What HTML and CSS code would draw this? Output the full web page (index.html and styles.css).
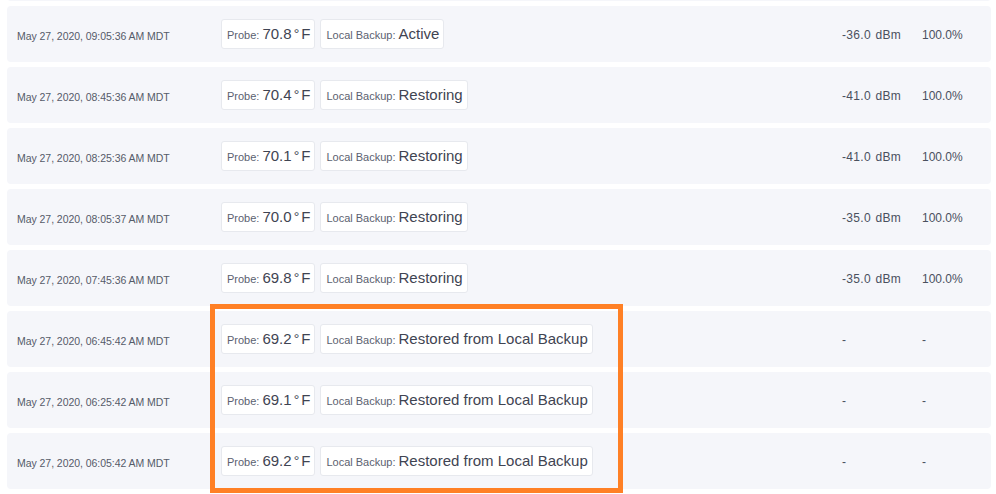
FILE: index.html
```html
<!DOCTYPE html>
<html lang="en">
<head>
<meta charset="utf-8">
<title>Readings</title>
<link rel="stylesheet" href="styles.css">
</head>
<body>
<div class="page">
  <div class="list">
    <div class="row row-edge"></div>
    <div class="row">
      <div class="date">May 27, 2020, 09:05:36 AM MDT</div>
      <div class="badges">
        <span class="badge"><span class="lbl">Probe:</span><span class="val">70.8<span class="deg">°</span>F</span></span>
        <span class="badge"><span class="lbl">Local Backup:</span><span class="val">Active</span></span>
      </div>
      <div class="sig">-36.0 dBm</div>
      <div class="bat">100.0%</div>
    </div>
    <div class="row">
      <div class="date">May 27, 2020, 08:45:36 AM MDT</div>
      <div class="badges">
        <span class="badge"><span class="lbl">Probe:</span><span class="val">70.4<span class="deg">°</span>F</span></span>
        <span class="badge"><span class="lbl">Local Backup:</span><span class="val">Restoring</span></span>
      </div>
      <div class="sig">-41.0 dBm</div>
      <div class="bat">100.0%</div>
    </div>
    <div class="row">
      <div class="date">May 27, 2020, 08:25:36 AM MDT</div>
      <div class="badges">
        <span class="badge"><span class="lbl">Probe:</span><span class="val">70.1<span class="deg">°</span>F</span></span>
        <span class="badge"><span class="lbl">Local Backup:</span><span class="val">Restoring</span></span>
      </div>
      <div class="sig">-41.0 dBm</div>
      <div class="bat">100.0%</div>
    </div>
    <div class="row">
      <div class="date">May 27, 2020, 08:05:37 AM MDT</div>
      <div class="badges">
        <span class="badge"><span class="lbl">Probe:</span><span class="val">70.0<span class="deg">°</span>F</span></span>
        <span class="badge"><span class="lbl">Local Backup:</span><span class="val">Restoring</span></span>
      </div>
      <div class="sig">-35.0 dBm</div>
      <div class="bat">100.0%</div>
    </div>
    <div class="row">
      <div class="date">May 27, 2020, 07:45:36 AM MDT</div>
      <div class="badges">
        <span class="badge"><span class="lbl">Probe:</span><span class="val">69.8<span class="deg">°</span>F</span></span>
        <span class="badge"><span class="lbl">Local Backup:</span><span class="val">Restoring</span></span>
      </div>
      <div class="sig">-35.0 dBm</div>
      <div class="bat">100.0%</div>
    </div>
    <div class="row">
      <div class="date">May 27, 2020, 06:45:42 AM MDT</div>
      <div class="badges">
        <span class="badge"><span class="lbl">Probe:</span><span class="val">69.2<span class="deg">°</span>F</span></span>
        <span class="badge"><span class="lbl">Local Backup:</span><span class="val">Restored from Local Backup</span></span>
      </div>
      <div class="sig">-</div>
      <div class="bat">-</div>
    </div>
    <div class="row">
      <div class="date">May 27, 2020, 06:25:42 AM MDT</div>
      <div class="badges">
        <span class="badge"><span class="lbl">Probe:</span><span class="val">69.1<span class="deg">°</span>F</span></span>
        <span class="badge"><span class="lbl">Local Backup:</span><span class="val">Restored from Local Backup</span></span>
      </div>
      <div class="sig">-</div>
      <div class="bat">-</div>
    </div>
    <div class="row">
      <div class="date">May 27, 2020, 06:05:42 AM MDT</div>
      <div class="badges">
        <span class="badge"><span class="lbl">Probe:</span><span class="val">69.2<span class="deg">°</span>F</span></span>
        <span class="badge"><span class="lbl">Local Backup:</span><span class="val">Restored from Local Backup</span></span>
      </div>
      <div class="sig">-</div>
      <div class="bat">-</div>
    </div>
  </div>
  <div class="highlight"></div>
</div>
</body>
</html>
```
FILE: styles.css
```css
html, body {
  margin: 0;
  padding: 0;
  background: #ffffff;
}
body {
  font-family: "Liberation Sans", Arial, sans-serif;
  color: #444a58;
  overflow: hidden;
}
.page {
  position: relative;
  padding: 0 5px 0 7px;
  height: 494px;
  overflow: hidden;
}
.list {
  display: flex;
  flex-direction: column;
  gap: 5px;
  margin-top: -55px;
}
.row {
  display: grid;
  grid-template-columns: 204px 1fr 80px 69px;
  align-items: center;
  height: 56px;
  padding-left: 10px;
  background: #f5f6fa;
  border-radius: 4px;
  box-sizing: border-box;
}
.row-edge {
  display: block;
}
.date {
  font-size: 10.5px;
  letter-spacing: -0.05px;
  color: #555b69;
  padding-top: 4px;
}
.badges {
  display: flex;
  gap: 5px;
  align-items: center;
}
.badge {
  display: inline-flex;
  align-items: baseline;
  height: 30px;
  box-sizing: border-box;
  padding: 0 4px 0 5px;
  line-height: 28px;
  background: #ffffff;
  border: 1px solid #e7e9ee;
  border-radius: 3px;
  white-space: nowrap;
}
.lbl {
  font-size: 11px;
  color: #5b6170;
}
.val {
  font-size: 15px;
  color: #3f4452;
  margin-left: 3px;
}
.deg {
  font-size: 14px;
  margin: 0 2px;
}
.sig, .bat {
  font-size: 12px;
  color: #4a505e;
  padding-top: 2px;
}
.sig {
  word-spacing: 1px;
  letter-spacing: 0.3px;
}
.highlight {
  position: absolute;
  left: 210px;
  top: 304px;
  width: 413px;
  height: 189px;
  box-sizing: border-box;
  border: 5px solid #ff8025;
  pointer-events: none;
}
```
